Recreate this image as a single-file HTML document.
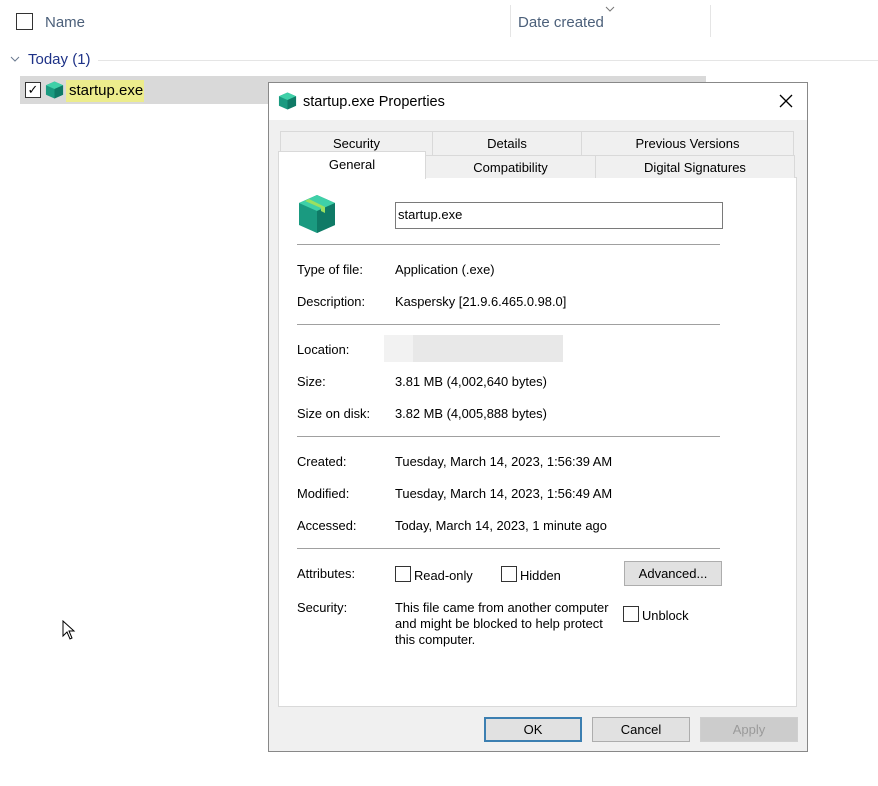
<!DOCTYPE html>
<html><head><style>
*{margin:0;padding:0;box-sizing:border-box}
body{width:878px;height:786px;background:#fff;font-family:"Liberation Sans",sans-serif;position:relative;overflow:hidden;color:#000}
.a{position:absolute;white-space:nowrap}
.t{font-size:12.9px}
.cb{position:absolute;width:16px;height:16px;border:1px solid #333;background:#fff}
.hr{position:absolute;left:297px;width:423px;height:1px;background:#a0a0a0}
.tab{position:absolute;border:1px solid #d9d9d9;border-bottom:none;background:#f0f0f0;font-size:13px;text-align:center;line-height:24px;color:#000}
.btn{position:absolute;height:25px;border:1px solid #adadad;background:#e1e1e1;font-size:13px;text-align:center;line-height:23px}
</style></head><body>
<div class="cb" style="left:16px;top:13px;width:17px;height:17px"></div>
<div class="a" style="left:45px;top:14px;font-size:15px;color:#4c607a">Name</div>
<div class="a" style="left:510px;top:5px;width:1px;height:32px;background:#e5e5e5"></div>
<div class="a" style="left:710px;top:5px;width:1px;height:32px;background:#e5e5e5"></div>
<div class="a" style="left:518px;top:14px;font-size:15px;color:#4c607a">Date created</div>
<svg class="a" style="left:605px;top:6px" width="10" height="6"><path d="M1 1L5 5L9 1" stroke="#777" fill="none"/></svg>
<svg class="a" style="left:10px;top:56px" width="10" height="6"><path d="M1 1L5 5L9 1" stroke="#6a7a90" fill="none"/></svg>
<div class="a" style="left:28px;top:51px;font-size:15px;color:#1e3287">Today (1)</div>
<div class="a" style="left:98px;top:60px;width:780px;height:1px;background:#e5e5e5"></div>
<div class="a" style="left:20px;top:76px;width:686px;height:28px;background:#d9d9d9"></div>
<div class="cb" style="left:25px;top:82px;border-color:#333;background:#fff;font-size:13px;line-height:13px;text-align:center">&#10003;</div>
<svg class="a" style="left:45px;top:80px" width="19" height="20" viewBox="0 0 20 20"><path d="M10 1L19 5V15L10 19L1 15V5Z" fill="#1a9a80"/><path d="M10 1L19 5L10 9L1 5Z" fill="#3fd0a8"/><path d="M10 9V19L19 15V5Z" fill="#0f7a66"/></svg>
<div class="a" style="left:66px;top:80px;height:22px;width:78px;background:#ecec8c"></div>
<div class="a" style="left:69px;top:82px;font-size:15px">startup.exe</div>

<div class="a" style="left:268px;top:82px;width:540px;height:670px;border:1px solid #888;background:#f0f0f0"></div>
<div class="a" style="left:269px;top:83px;width:538px;height:37px;background:#fff"></div>
<svg class="a" style="left:278px;top:91px" width="19" height="20" viewBox="0 0 20 20"><path d="M10 1L19 5V15L10 19L1 15V5Z" fill="#1a9a80"/><path d="M10 1L19 5L10 9L1 5Z" fill="#3fd0a8"/><path d="M10 9V19L19 15V5Z" fill="#0f7a66"/></svg>
<div class="a" style="left:303px;top:94px;font-size:14.5px">startup.exe Properties</div>
<svg class="a" style="left:779px;top:94px" width="14" height="14"><path d="M1 1L13 13M13 1L1 13" stroke="#000" stroke-width="1.3"/></svg>

<div class="tab" style="left:280px;top:131px;width:153px;height:24px">Security</div>
<div class="tab" style="left:432px;top:131px;width:150px;height:24px">Details</div>
<div class="tab" style="left:581px;top:131px;width:213px;height:24px">Previous Versions</div>
<div class="a" style="left:278px;top:177px;width:519px;height:530px;border:1px solid #d9d9d9;background:#fff"></div>
<div class="tab" style="left:425px;top:155px;width:171px;height:23px">Compatibility</div>
<div class="tab" style="left:595px;top:155px;width:200px;height:23px">Digital Signatures</div>
<div class="tab" style="left:278px;top:151px;width:148px;height:28px;background:#fff;line-height:26px;border-bottom:none">General</div>

<svg class="a" style="left:297px;top:193px" width="40" height="42" viewBox="0 0 20 21"><path d="M10 1L19 5V16L10 20L1 16V5Z" fill="#1a9a80"/><path d="M10 1L19 5L10 9L1 5Z" fill="#3fd0a8"/><path d="M10 9V20L19 16V5Z" fill="#0f7a66"/><path d="M6 3L14 7V10L12 9V7.5L4 4Z" fill="#9be060"/></svg>
<div class="a" style="left:395px;top:202px;width:328px;height:27px;border:1px solid #7a7a7a;background:#fff;font-size:13px;padding:4px 2px">startup.exe</div>
<div class="hr" style="top:244px"></div>
<div class="a t" style="left:297px;top:262px">Type of file:</div><div class="a t" style="left:395px;top:262px">Application (.exe)</div>
<div class="a t" style="left:297px;top:294px">Description:</div><div class="a t" style="left:395px;top:294px">Kaspersky [21.9.6.465.0.98.0]</div>
<div class="hr" style="top:324px"></div>
<div class="a t" style="left:297px;top:342px">Location:</div>
<div class="a" style="left:384px;top:335px;width:179px;height:27px;background:#f2f2f2"></div>
<div class="a" style="left:413px;top:335px;width:150px;height:27px;background:#e8e8e8"></div>
<div class="a t" style="left:297px;top:374px">Size:</div><div class="a t" style="left:395px;top:374px">3.81 MB (4,002,640 bytes)</div>
<div class="a t" style="left:297px;top:406px">Size on disk:</div><div class="a t" style="left:395px;top:406px">3.82 MB (4,005,888 bytes)</div>
<div class="hr" style="top:436px"></div>
<div class="a t" style="left:297px;top:454px">Created:</div><div class="a t" style="left:395px;top:454px">Tuesday, March 14, 2023, 1:56:39 AM</div>
<div class="a t" style="left:297px;top:486px">Modified:</div><div class="a t" style="left:395px;top:486px">Tuesday, March 14, 2023, 1:56:49 AM</div>
<div class="a t" style="left:297px;top:518px">Accessed:</div><div class="a t" style="left:395px;top:518px">Today, March 14, 2023, 1 minute ago</div>
<div class="hr" style="top:548px"></div>
<div class="a t" style="left:297px;top:566px">Attributes:</div>
<div class="cb" style="left:395px;top:566px"></div><div class="a t" style="left:414px;top:568px">Read-only</div>
<div class="cb" style="left:501px;top:566px"></div><div class="a t" style="left:520px;top:568px">Hidden</div>
<div class="btn" style="left:624px;top:561px;width:98px">Advanced...</div>
<div class="a t" style="left:297px;top:600px">Security:</div>
<div class="a t" style="left:395px;top:600px;line-height:16px">This file came from another computer<br>and might be blocked to help protect<br>this computer.</div>
<div class="cb" style="left:623px;top:606px"></div><div class="a t" style="left:642px;top:608px">Unblock</div>

<div class="btn" style="left:484px;top:717px;width:98px;border:2px solid #3c7fb1;line-height:21px">OK</div>
<div class="btn" style="left:592px;top:717px;width:98px">Cancel</div>
<div class="btn" style="left:700px;top:717px;width:98px;color:#9a9a9a;border-color:#cfcfcf;background:#ccc">Apply</div>

<svg class="a" style="left:62px;top:620px" width="14" height="20"><path d="M1 1V16L5 12L8 19L10 18L7 11H12Z" fill="#fff" stroke="#000" stroke-width="1"/></svg>
</body></html>
